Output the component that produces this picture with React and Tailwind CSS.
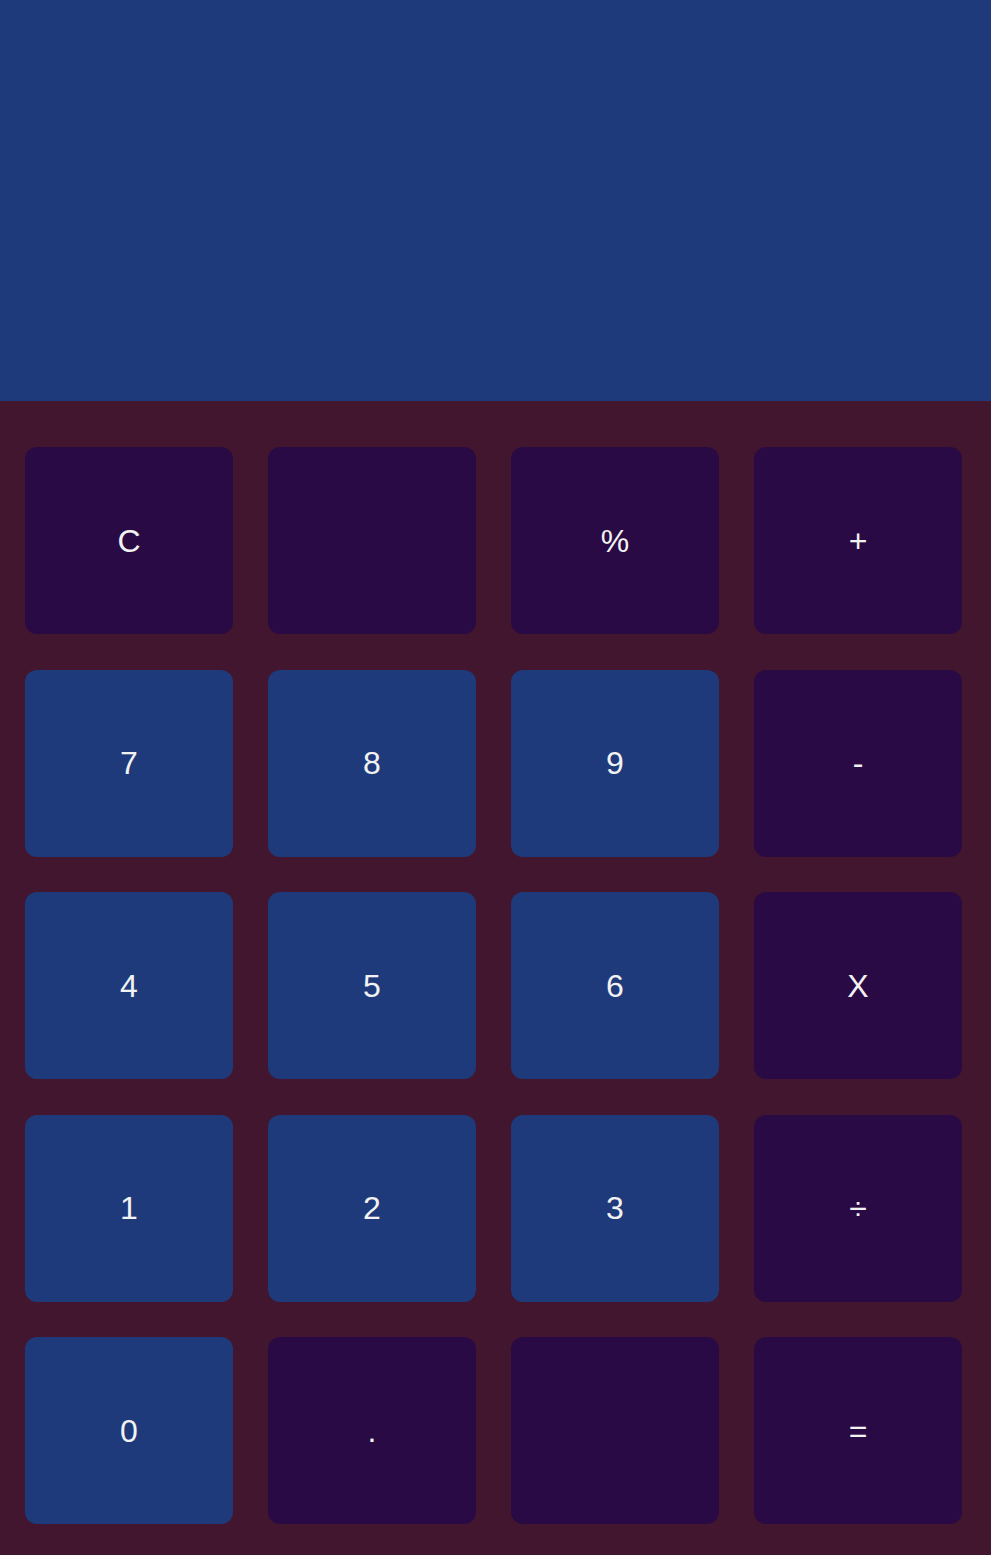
import React from 'react';

const keys = [
  { label: 'C', kind: 'op' },
  { label: '', kind: 'op' },
  { label: '%', kind: 'op' },
  { label: '+', kind: 'op' },
  { label: '7', kind: 'num' },
  { label: '8', kind: 'num' },
  { label: '9', kind: 'num' },
  { label: '-', kind: 'op' },
  { label: '4', kind: 'num' },
  { label: '5', kind: 'num' },
  { label: '6', kind: 'num' },
  { label: 'X', kind: 'op' },
  { label: '1', kind: 'num' },
  { label: '2', kind: 'num' },
  { label: '3', kind: 'num' },
  { label: '÷', kind: 'op' },
  { label: '0', kind: 'num' },
  { label: '.', kind: 'op' },
  { label: '', kind: 'op' },
  { label: '=', kind: 'op' },
];

const App = () => {
  return (
    <div className="w-full min-h-[1555px] flex flex-col font-['Liberation_Sans',Arial,sans-serif]">
      {/* 表示エリア */}
      <div className="h-[401px] bg-[#1e3a7a]"></div>

      {/* キーパッド */}
      <div className="flex-1 bg-[#42162f] pl-[25px] pr-[29px] pt-[46px] pb-[31px]">
        <div className="grid grid-cols-4 gap-x-[35px] gap-y-[35.5px]">
          {keys.map((k, i) => (
            <button
              key={i}
              className={
                k.kind === 'num'
                  ? 'h-[187px] rounded-[12px] bg-[#1e3a7a] text-[#f2f2f2] text-[32px] flex items-center justify-center'
                  : 'h-[187px] rounded-[12px] bg-[#2a0a44] text-[#f2f2f2] text-[32px] flex items-center justify-center'
              }
            >
              {k.label}
            </button>
          ))}
        </div>
      </div>
    </div>
  );
};

export default App;
